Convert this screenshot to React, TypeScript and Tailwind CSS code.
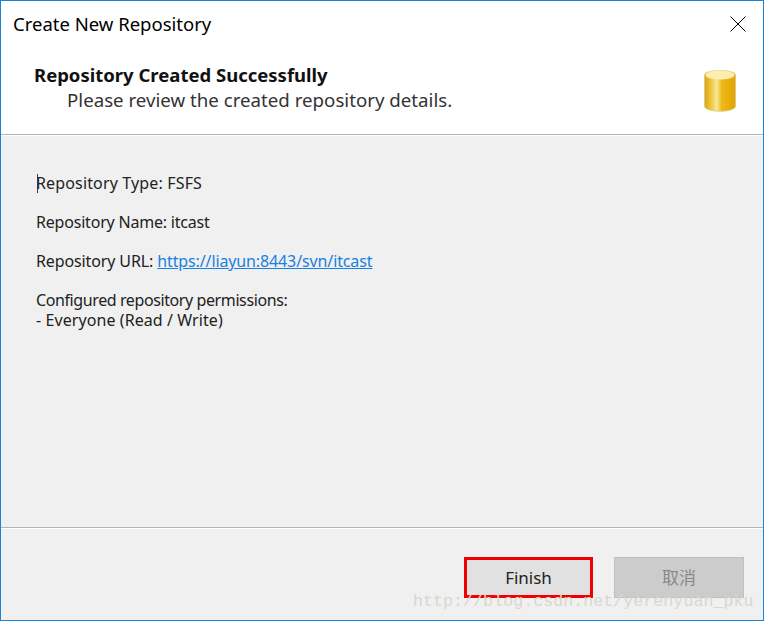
const uiFont = { fontFamily: '"Noto Sans", "Noto Sans CJK SC", sans-serif' };

function DbIcon() {
  return (
    <svg width="32" height="44" viewBox="0 0 32 44">
      <defs>
        <linearGradient id="body" x1="0" x2="1" y1="0" y2="0">
          <stop offset="0" stopColor="#d9a514" />
          <stop offset="0.2" stopColor="#eec53c" />
          <stop offset="0.4" stopColor="#f8e898" />
          <stop offset="0.55" stopColor="#eeb919" />
          <stop offset="1" stopColor="#e3a400" />
        </linearGradient>
      </defs>
      <path d="M0.5 6 C0.5 0 31.5 0 31.5 6 V37 C31.5 44 0.5 44 0.5 37 Z" fill="url(#body)" stroke="#d8c88e" strokeWidth="0.8" />
      <ellipse cx="16" cy="6" rx="14.5" ry="4.5" fill="#fbeeae" />
    </svg>
  );
}

export default function App() {
  return (
    <div
      className="h-[621px] w-[764px] flex flex-col border border-[#1883d7] bg-[#f0f0f0] text-[#1c1c1c] relative overflow-hidden"
      style={uiFont}
    >
      <div className="bg-white h-[133px] flex flex-col shrink-0">
        <div className="flex items-center justify-between h-[45px] pl-3 pr-[17px]">
          <p className="text-[18.5px] text-black">Create New Repository</p>
          <svg width="16" height="16" viewBox="0 0 16 16" className="text-black">
            <path d="M0.5 0.5 L15.5 15.5 M15.5 0.5 L0.5 15.5" stroke="currentColor" strokeWidth="1" />
          </svg>
        </div>
        <div className="flex justify-between pl-[33px] pr-[27px] pt-[16px]">
          <div>
            <p className="text-[18.5px] leading-[26px] font-bold text-[#111]">Repository Created Successfully</p>
            <p className="text-[18.7px] leading-[24px] pl-[33px] text-[#333]">Please review the created repository details.</p>
          </div>
          <div className="pt-[7px]">
            <DbIcon />
          </div>
        </div>
      </div>
      <div className="h-[2px] bg-[#b4b4b4] border-b border-white shrink-0" />

      <div className="flex-1 pl-[35px] pt-[37px] text-[16px] leading-[20px] text-[#222] relative">
        <span className="absolute left-[36px] top-[38px] h-[19px] w-px bg-[#3a3a3a]" />
        <p className="mb-[19px] tracking-[0.15px]">Repository Type: FSFS</p>
        <p className="mb-[19px] tracking-[-0.2px]">Repository Name: itcast</p>
        <p className="mb-[19px] tracking-[-0.12px]">
          Repository URL: <a className="text-[#1a7fe0] underline">https://liayun:8443/svn/itcast</a>
        </p>
        <p className="tracking-[-0.4px]">Configured repository permissions:</p>
        <p className="tracking-[0.08px]">- Everyone (Read / Write)</p>
      </div>

      <div className="h-[2px] bg-[#b4b4b4] border-b border-white shrink-0" />
      <div className="h-[91px] shrink-0 flex justify-end gap-[21px] pt-[28px] pr-[19px]">
        <button className="w-[129px] h-[41px] border-[3px] border-[#f00000] bg-[#e1e1e1] text-[17px] text-[#222]">
          Finish
        </button>
        <button className="w-[130px] h-[41px] border border-[#bfbfbf] bg-[#cccccc] text-[17px] text-[#888]">
          取消
        </button>
      </div>

      <span
        className="absolute left-[412px] top-[590px] text-[16.7px] leading-[22px] text-[#d8d8cf] whitespace-nowrap"
        style={{ fontFamily: '"Liberation Mono", monospace' }}
      >
        http://blog.csdn.net/yerenyuan_pku
      </span>
    </div>
  );
}
